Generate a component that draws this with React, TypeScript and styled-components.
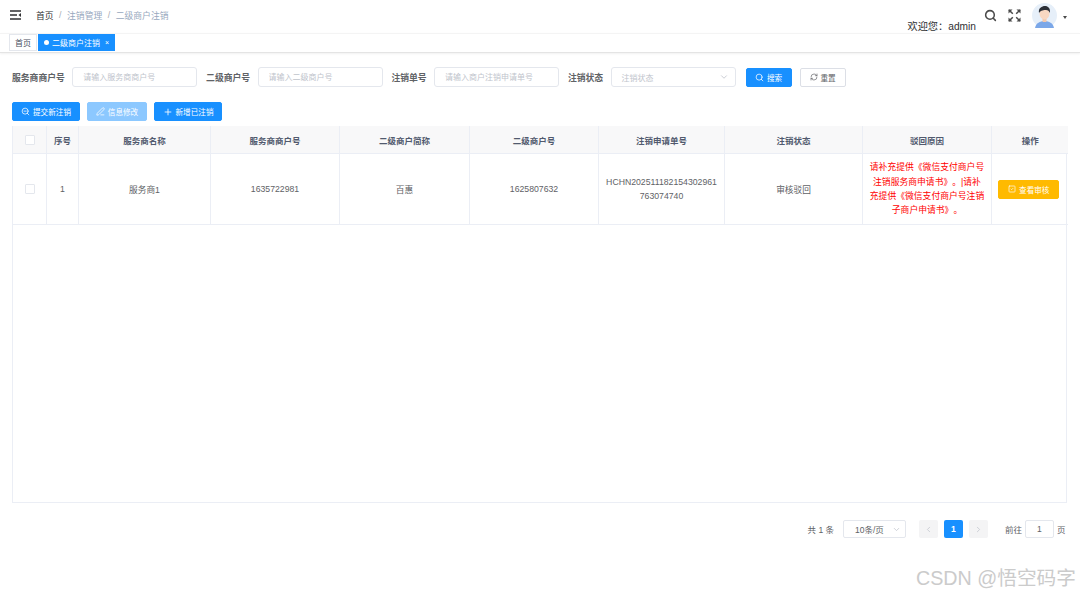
import React from "react";
import styled, { createGlobalStyle } from "styled-components";
import { ChevronDown, ChevronLeft, ChevronRight, PenLine, Plus, RefreshCw, Search, SquareCheck, ZoomOut } from "lucide-react";

const columns = [33, 32, 132, 129, 130, 129, 126, 138, 129, 77];

const headers = ["", "序号", "服务商名称", "服务商商户号", "二级商户简称", "二级商户号", "注销申请单号", "注销状态", "驳回原因", "操作"];

const App: React.FC = () => {
  return (
    <Page>
      <GlobalStyle />
      <TopBar>
        <TopLeft>
          <svg width="12" height="10" viewBox="0 0 12 10">
            <path d="M0 1h11M0 5h7M0 9h11" stroke="#303133" strokeWidth="1.5" />
            <path d="M11 3v4L8.500 5z" fill="#303133" />
          </svg>
          <Breadcrumb>
            <Crumb $current>首页</Crumb>
            <Slash>/</Slash>
            <Crumb>注销管理</Crumb>
            <Slash>/</Slash>
            <Crumb>二级商户注销</Crumb>
          </Breadcrumb>
        </TopLeft>
        <TopRight>
          <Welcome>欢迎您：admin</Welcome>
          <Search size={13} color="#4a4a4a" strokeWidth={2.8} />
          <svg width="13" height="13" viewBox="0 0 13 13">
            <path d="M1 1l3.800 3.800M12 1L8.200 4.800M1 12l3.800-3.800M12 12L8.200 8.200" stroke="#4a4a4a" strokeWidth="1.500" />
            <path d="M.5.500h4l-4 4zM12.500.500h-4l4 4zM.5 12.500h4l-4-4zM12.500 12.500h-4l4-4z" fill="#4a4a4a" />
          </svg>
          <Avatar>
            <svg width="25" height="25" viewBox="0 0 25 25">
              <circle cx="12.500" cy="12.500" r="12.500" fill="#e6eff9" />
              <path d="M3 25c1-5 5-7 9.500-7s8.500 2 9.500 7z" fill="#7ba7e8" />
              <rect x="10.500" y="13" width="4" height="6" fill="#f3c9ae" />
              <ellipse cx="12.500" cy="10.500" rx="5" ry="6" fill="#f8d8c2" />
              <path d="M7 10c-1-5 3-7 6-7s5.500 2 5 7c-1-2-2-3-4-3s-5 0-7 3z" fill="#2c3038" />
            </svg>
          </Avatar>
          <Caret />
        </TopRight>
      </TopBar>

      <TagsBar>
        <Tag>首页</Tag>
        <Tag $active>
          <TagDot />
          二级商户注销
          <TagClose>×</TagClose>
        </Tag>
      </TagsBar>

      <Content>
        <FilterRow>
          <FieldLabel>服务商商户号</FieldLabel>
          <TextInput placeholder="请输入服务商商户号" readOnly />
          <FieldLabel>二级商户号</FieldLabel>
          <TextInput placeholder="请输入二级商户号" readOnly />
          <FieldLabel>注销单号</FieldLabel>
          <TextInput placeholder="请输入商户注销申请单号" readOnly />
          <FieldLabel>注销状态</FieldLabel>
          <SelectBox>
            注销状态
            <ChevronDown size={10} color="#c0c4cc" />
          </SelectBox>
          <FilterButtons>
            <Button $variant="primary" $width={46}>
              <Search size={9} />
              搜索
            </Button>
            <Button $variant="plain" $width={46}>
              <RefreshCw size={8} />
              重置
            </Button>
          </FilterButtons>
        </FilterRow>

        <ActionRow>
          <Button $variant="primary" $width={68}>
            <ZoomOut size={9} />
            提交新注销
          </Button>
          <Button $variant="disabled" $width={60}>
            <PenLine size={9} />
            信息修改
          </Button>
          <Button $variant="primary" $width={68}>
            <Plus size={10} />
            新增已注销
          </Button>
        </ActionRow>

        <TableFrame>
          <Table>
            <colgroup>
              {columns.map((width, i) => (
                <col key={i} style={{ width }} />
              ))}
            </colgroup>
            <thead>
              <tr>
                {headers.map((title, i) => (
                  <HeadCell key={i}>{i === 0 ? <Checkbox /> : title}</HeadCell>
                ))}
              </tr>
            </thead>
            <tbody>
              <tr>
                <BodyCell>
                  <Checkbox />
                </BodyCell>
                <BodyCell>1</BodyCell>
                <BodyCell>服务商1</BodyCell>
                <BodyCell>1635722981</BodyCell>
                <BodyCell>百惠</BodyCell>
                <BodyCell>1625807632</BodyCell>
                <BodyCell>
                  <OrderNo>HCHN202511182154302961763074740</OrderNo>
                </BodyCell>
                <BodyCell>审核驳回</BodyCell>
                <BodyCell>
                  <Reason>请补充提供《微信支付商户号注销服务商申请书》。|请补充提供《微信支付商户号注销子商户申请书》。</Reason>
                </BodyCell>
                <BodyCell>
                  <Button $variant="warning" $width={61}>
                    <SquareCheck size={8} />
                    查看审核
                  </Button>
                </BodyCell>
              </tr>
            </tbody>
          </Table>
        </TableFrame>

        <Pagination>
          <PageText>共 1 条</PageText>
          <PageSize>
            10条/页
            <ChevronDown size={9} color="#c0c4cc" />
          </PageSize>
          <PagerGroup>
            <PagerButton>
              <ChevronLeft size={9} />
            </PagerButton>
            <PagerButton $active>1</PagerButton>
            <PagerButton>
              <ChevronRight size={9} />
            </PagerButton>
          </PagerGroup>
          <JumpGroup>
            <PageText>前往</PageText>
            <JumpInput>1</JumpInput>
            <PageText>页</PageText>
          </JumpGroup>
        </Pagination>
      </Content>

      <Watermark>CSDN @悟空码字</Watermark>
    </Page>
  );
};

const GlobalStyle = createGlobalStyle`
  html, body {
    margin: 0;
    padding: 0;
    background: #fff;
  }
  body {
    font-family: "Liberation Sans", "Noto Sans CJK SC", sans-serif;
    text-spacing-trim: space-all;
  }
`;

const Page = styled.div`
  position: relative;
  width: 1080px;
  height: 594px;
  overflow: hidden;
  background: #fff;
`;

const TopBar = styled.header`
  height: 33px;
  display: flex;
  justify-content: space-between;
  align-items: center;
  padding: 0 13px 3px 10px;
  box-sizing: border-box;
`;

const TopLeft = styled.div`
  display: flex;
  align-items: center;
  gap: 14px;
`;

const Breadcrumb = styled.div`
  display: flex;
  align-items: center;
  gap: 4.500px;
  font-size: 8.800px;
`;

const Crumb = styled.span<{ $current?: boolean }>`
  color: ${(p) => (p.$current ? "#303133" : "#97a8be")};
`;

const Slash = styled.span`
  color: #a8abb2;
  margin: 0 1px;
`;

const TopRight = styled.div`
  display: flex;
  align-items: center;
  gap: 11px;
`;

const Welcome = styled.span`
  font-size: 10.200px;
  color: #303133;
  margin: 21px -3px 0 0;
`;

const Avatar = styled.div`
  width: 25px;
  height: 25px;
  display: flex;
`;

const Caret = styled.span`
  width: 0;
  height: 0;
  margin: 5px 0 0 -5px;
  border-left: 2.500px solid transparent;
  border-right: 2.500px solid transparent;
  border-top: 3px solid #4a4a4a;
`;

const TagsBar = styled.nav`
  height: 20px;
  display: flex;
  align-items: center;
  gap: 1px;
  padding: 0 0 1px 9px;
  box-sizing: border-box;
  border-top: 1px solid #f4f4f4;
  border-bottom: 1px solid #e4e4e4;
  box-shadow: 0 1px 2px rgba(0, 0, 0, 0.06);
`;

const Tag = styled.span<{ $active?: boolean }>`
  height: 17px;
  display: flex;
  align-items: center;
  padding: 0 5px;
  box-sizing: border-box;
  font-size: 8px;
  color: ${(p) => (p.$active ? "#fff" : "#495060")};
  background: ${(p) => (p.$active ? "#1890ff" : "#fff")};
  border: 1px solid ${(p) => (p.$active ? "#1890ff" : "#e4e7ed")};
`;

const TagDot = styled.i`
  width: 5px;
  height: 5px;
  margin-right: 3px;
  border-radius: 50%;
  background: #fff;
`;

const TagClose = styled.span`
  margin-left: 5px;
  font-size: 7px;
`;

const Content = styled.main`
  padding: 14px 13px 0 12px;
`;

const FilterRow = styled.div`
  height: 20px;
  display: flex;
  align-items: center;
`;

const FieldLabel = styled.label`
  font-size: 8.800px;
  font-weight: 700;
  color: #606266;
  margin: 0 7.500px 0 8.800px;
  white-space: nowrap;

  &:first-child {
    margin-left: 0;
  }
`;

const TextInput = styled.input`
  width: 125px;
  height: 20px;
  padding: 0 10px;
  box-sizing: border-box;
  border: 1px solid #e4e7ed;
  border-radius: 3px;
  outline: none;
  font-size: 8px;
  font-family: inherit;

  &::placeholder {
    color: #c0c4cc;
  }
`;

const SelectBox = styled.div`
  width: 125px;
  height: 20px;
  display: flex;
  align-items: center;
  justify-content: space-between;
  padding: 0 6px 0 10px;
  box-sizing: border-box;
  border: 1px solid #e4e7ed;
  border-radius: 3px;
  font-size: 8px;
  color: #c0c4cc;
`;

const FilterButtons = styled.div`
  display: flex;
  gap: 8px;
  margin-left: 10px;
`;

const buttonColors = {
  primary: "background: #1890ff; border-color: #1890ff; color: #fff;",
  disabled: "background: #8cc8ff; border-color: #8cc8ff; color: #fff;",
  plain: "background: #fff; border-color: #dcdfe6; color: #606266;",
  warning: "background: #ffba00; border-color: #ffba00; color: #fff;",
};

const Button = styled.button<{ $variant: keyof typeof buttonColors; $width: number }>`
  width: ${(p) => p.$width}px;
  height: 19px;
  display: inline-flex;
  align-items: center;
  justify-content: center;
  gap: 3px;
  padding: 0;
  border: 1px solid;
  border-radius: 2px;
  font-size: 7.600px;
  font-family: inherit;
  white-space: nowrap;
  ${(p) => buttonColors[p.$variant]}
`;

const ActionRow = styled.div`
  display: flex;
  gap: 7px;
  margin-top: 15px;
`;

const TableFrame = styled.div`
  height: 377px;
  margin-top: 5px;
  box-sizing: border-box;
  border: 1px solid #ebeef5;
  border-top: 0;
`;

const Table = styled.table`
  width: 100%;
  table-layout: fixed;
  border-collapse: collapse;
  font-size: 8.700px;
`;

const HeadCell = styled.th`
  height: 27px;
  padding: 0 0 0 1px;
  background: #f8f8f9;
  border-right: 1px solid #ebeef5;
  border-bottom: 1px solid #ebeef5;
  color: #515a6e;
  font-size: 8.500px;
  font-weight: 700;
  text-align: center;

  &:last-child {
    border-right: 0;
  }
`;

const BodyCell = styled.td`
  height: 70px;
  padding: 0 0 0 1px;
  border-right: 1px solid #ebeef5;
  border-bottom: 1px solid #ebeef5;
  color: #606266;
  text-align: center;

  &:last-child {
    padding: 0 2px 0 0;
    border-right: 0;
  }
`;

const Checkbox = styled.span`
  display: block;
  width: 8px;
  height: 8px;
  margin: 0 auto;
  background: #fff;
  border: 1px solid #e4e7ed;
  border-radius: 1px;
`;

const OrderNo = styled.div`
  width: 114px;
  margin: 0 auto;
  line-height: 14px;
  word-break: break-all;
  text-align: center;
`;

const Reason = styled.div`
  width: 116px;
  margin: 0 auto;
  line-height: 14.400px;
  font-size: 8.800px;
  color: #f00;
  word-break: break-all;
`;

const Pagination = styled.div`
  display: flex;
  justify-content: flex-end;
  align-items: center;
  height: 18px;
  margin-top: 17px;
  padding-right: 1.500px;
`;

const PageText = styled.span`
  font-size: 8.500px;
  color: #606266;
`;

const PageSize = styled.div`
  width: 63px;
  height: 18px;
  margin-left: 9px;
  display: flex;
  align-items: center;
  justify-content: space-between;
  padding: 0 4px 0 11px;
  box-sizing: border-box;
  border: 1px solid #e4e7ed;
  border-radius: 2px;
  font-size: 8.500px;
  color: #606266;
`;

const PagerGroup = styled.div`
  display: flex;
  gap: 6px;
  margin-left: 13px;
`;

const PagerButton = styled.span<{ $active?: boolean }>`
  width: 19px;
  height: 18px;
  display: flex;
  align-items: center;
  justify-content: center;
  border-radius: 2px;
  font-size: 8.500px;
  font-weight: 700;
  background: ${(p) => (p.$active ? "#1890ff" : "#f4f4f5")};
  color: ${(p) => (p.$active ? "#fff" : "#c0c4cc")};
`;

const JumpGroup = styled.div`
  display: flex;
  align-items: center;
  gap: 3px;
  margin-left: 17px;
`;

const JumpInput = styled.span`
  width: 29px;
  height: 18px;
  display: flex;
  align-items: center;
  justify-content: center;
  box-sizing: border-box;
  border: 1px solid #e4e7ed;
  border-radius: 2px;
  font-size: 8.500px;
  color: #606266;
`;

const Watermark = styled.div`
  position: absolute;
  right: 4px;
  bottom: 3px;
  font-size: 19.700px;
  color: #cbcbcb;
  white-space: nowrap;
`;

export default App;
